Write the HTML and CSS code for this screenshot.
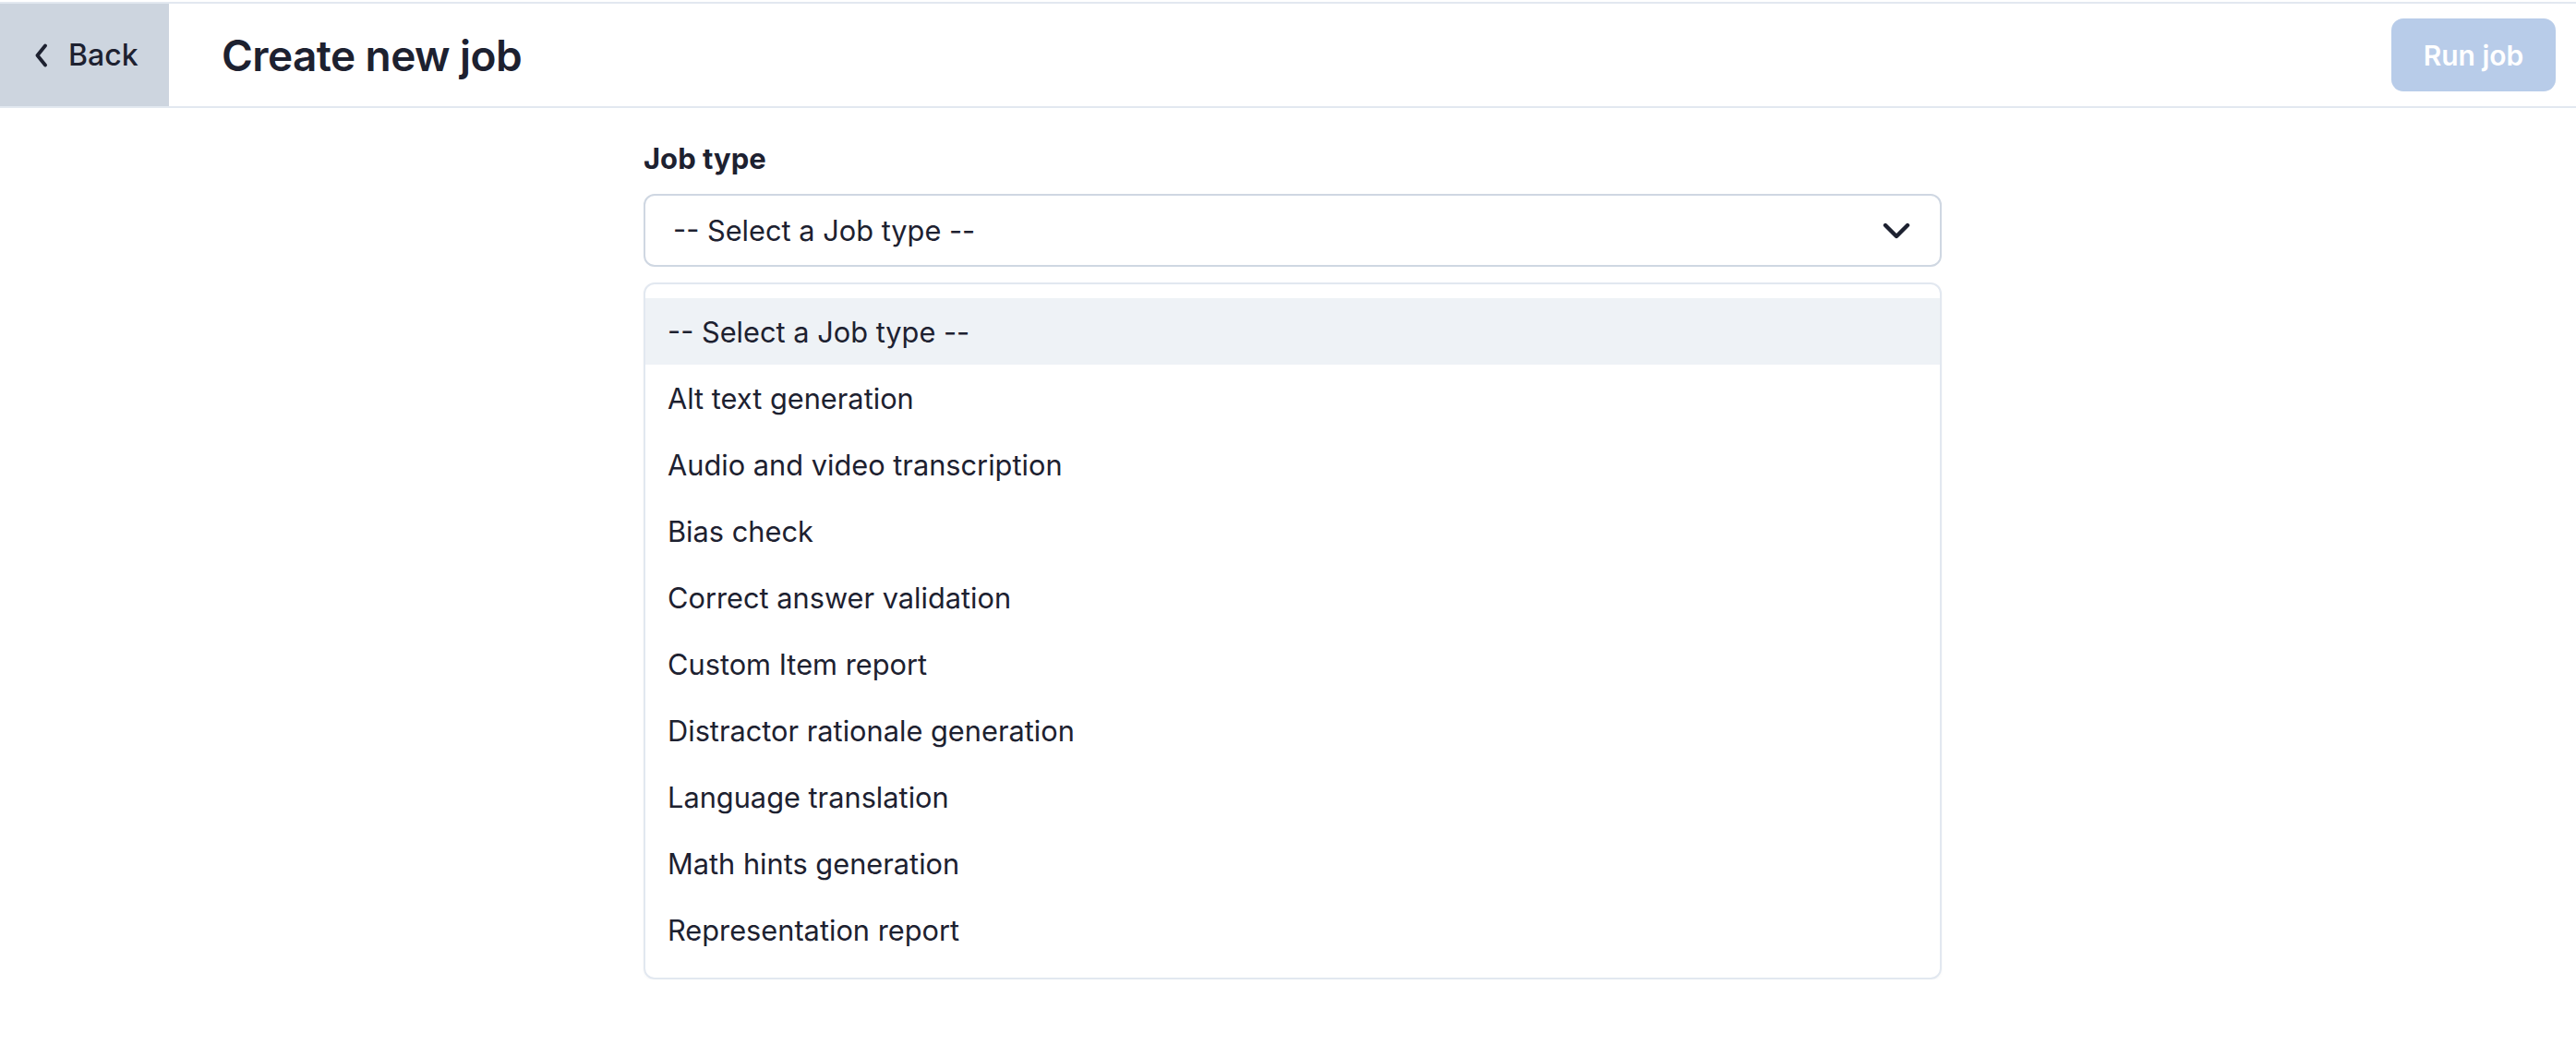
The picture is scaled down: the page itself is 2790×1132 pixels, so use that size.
FILE: index.html
```html
<!DOCTYPE html>
<html lang="en">
<head>
  <meta charset="UTF-8" />
  <meta name="viewport" content="width=device-width, initial-scale=1.0" />
  <title>Create new job</title>
  <link rel="stylesheet" href="styles.css">
</head>
<body>
  <header class="topbar">
    <a class="back-btn" href="#">
      <svg class="back-icon" width="16" height="26" viewBox="0 0 16 26" fill="none">
        <path d="M12 2.5 L3.5 13 L12 23.5" stroke="currentColor" stroke-width="3.8" stroke-linecap="round" stroke-linejoin="round"/>
      </svg>
      <span>Back</span>
    </a>
    <h1 class="page-title">Create new job</h1>
    <button class="run-btn" disabled>Run job</button>
  </header>

  <main class="job-form">
    <label class="field-label" for="jobType">Job type</label>
    <div class="select-box" id="jobType">
      <span>-- Select a Job type --</span>
      <svg class="select-arrow" width="30" height="18" viewBox="0 0 30 18" fill="none">
        <path d="M3 3 L15 15 L27 3" stroke="currentColor" stroke-width="4.4" stroke-linecap="round" stroke-linejoin="round"/>
      </svg>
    </div>

    <ul class="option-list">
      <li class="option active">-- Select a Job type --</li>
      <li class="option">Alt text generation</li>
      <li class="option">Audio and video transcription</li>
      <li class="option">Bias check</li>
      <li class="option">Correct answer validation</li>
      <li class="option">Custom Item report</li>
      <li class="option">Distractor rationale generation</li>
      <li class="option">Language translation</li>
      <li class="option">Math hints generation</li>
      <li class="option">Representation report</li>
    </ul>
  </main>
</body>
</html>
```

FILE: styles.css
```css
body {
  margin: 0;
  padding-top: 2px;
  font-family: Inter, "Noto Sans", sans-serif;
  color: #1d2130;
  background: #fff;
}

/* top bar */
.topbar {
  display: flex;
  align-items: stretch;
  height: 111px;
  border-top: 2px solid #e2e8f0;
  border-bottom: 2px solid #e2e8f0;
}
.back-btn {
  width: 183px;
  display: flex;
  align-items: center;
  gap: 21px;
  padding-left: 37px;
  box-sizing: border-box;
  background: #cdd5df;
  color: #1d2130;
  text-decoration: none;
  font-size: 32px;
  font-weight: 500;
}
.page-title {
  margin: 0 0 0 57px;
  align-self: center;
  font-size: 46px;
  font-weight: 600;
  letter-spacing: -0.6px;
}
.run-btn {
  margin: 0 22px 0 auto;
  align-self: center;
  width: 178px;
  height: 79px;
  border: none;
  border-radius: 13px;
  background: #b8cce9;
  color: #fff;
  font-family: inherit;
  font-size: 30px;
  font-weight: 600;
}

/* form */
.job-form {
  width: 1406px;
  margin-left: calc(50% - 698px);
}
.field-label {
  display: block;
  margin-top: 37px;
  font-size: 31px;
  line-height: 36px;
  font-weight: 700;
}
.select-box {
  margin-top: 20px;
  height: 79px;
  box-sizing: border-box;
  display: flex;
  align-items: center;
  justify-content: space-between;
  padding: 0 32px 0 30px;
  border: 2px solid #cfd7e2;
  border-radius: 12px;
  font-size: 30.75px;
}
.select-arrow {
  color: #1d2130;
}
.option-list {
  list-style: none;
  margin: 17px 0 0;
  padding: 15px 0 16px;
  border: 2px solid #e2e8f0;
  border-radius: 12px;
  box-shadow: 0 1px 3px rgba(15, 23, 42, 0.04);
}
.option {
  height: 72px;
  display: flex;
  align-items: center;
  padding-left: 24px;
  font-size: 30.75px;
}
.option.active {
  background: #eef2f6;
}
```
